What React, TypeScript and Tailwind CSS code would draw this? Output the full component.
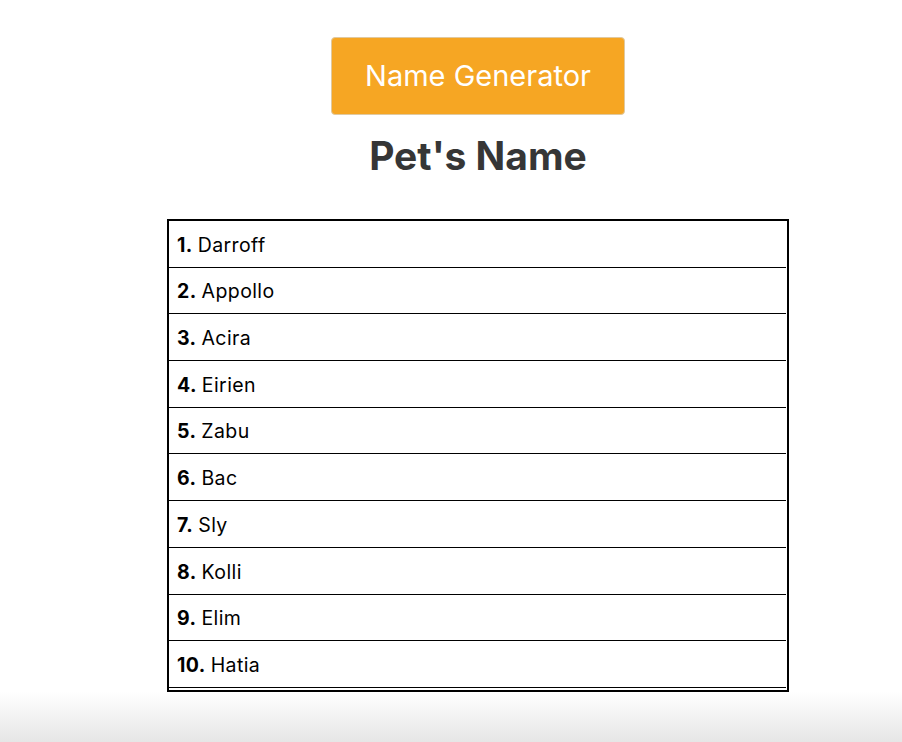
const names = ["Darroff", "Appollo", "Acira", "Eirien", "Zabu", "Bac", "Sly", "Kolli", "Elim", "Hatia"];

export default function App() {
    return (
        <div className="min-h-screen bg-white flex flex-col font-['Inter',sans-serif]">
            <div className="flex flex-col items-center pl-[54px] pt-[37px]">
                <button className="w-[294px] h-[78px] bg-[#f6a623] border border-[#e0c9a0] rounded text-white text-[29px] font-normal">
                    Name Generator
                </button>
                <h1 className="mt-[17px] text-[39px] font-bold text-[#363636] leading-[48px]">Pet's Name</h1>
                <ul className="mt-[39px] w-[622px] border-2 border-black pr-[1px]">
                    {names.map((n, i) => (
                        <li key={n} className="h-[46.7px] border-b border-black flex items-center pt-[3px] pl-2 text-[19.5px] tracking-[0.4px] text-black">
                            <span className="font-bold mr-[5px]">{i + 1}.</span>
                            {n}
                        </li>
                    ))}
                    <li className="h-[2px]"></li>
                </ul>
            </div>
            <div className="flex-1 bg-gradient-to-b from-white to-[#e6e6e6]"></div>
        </div>
    );
}
